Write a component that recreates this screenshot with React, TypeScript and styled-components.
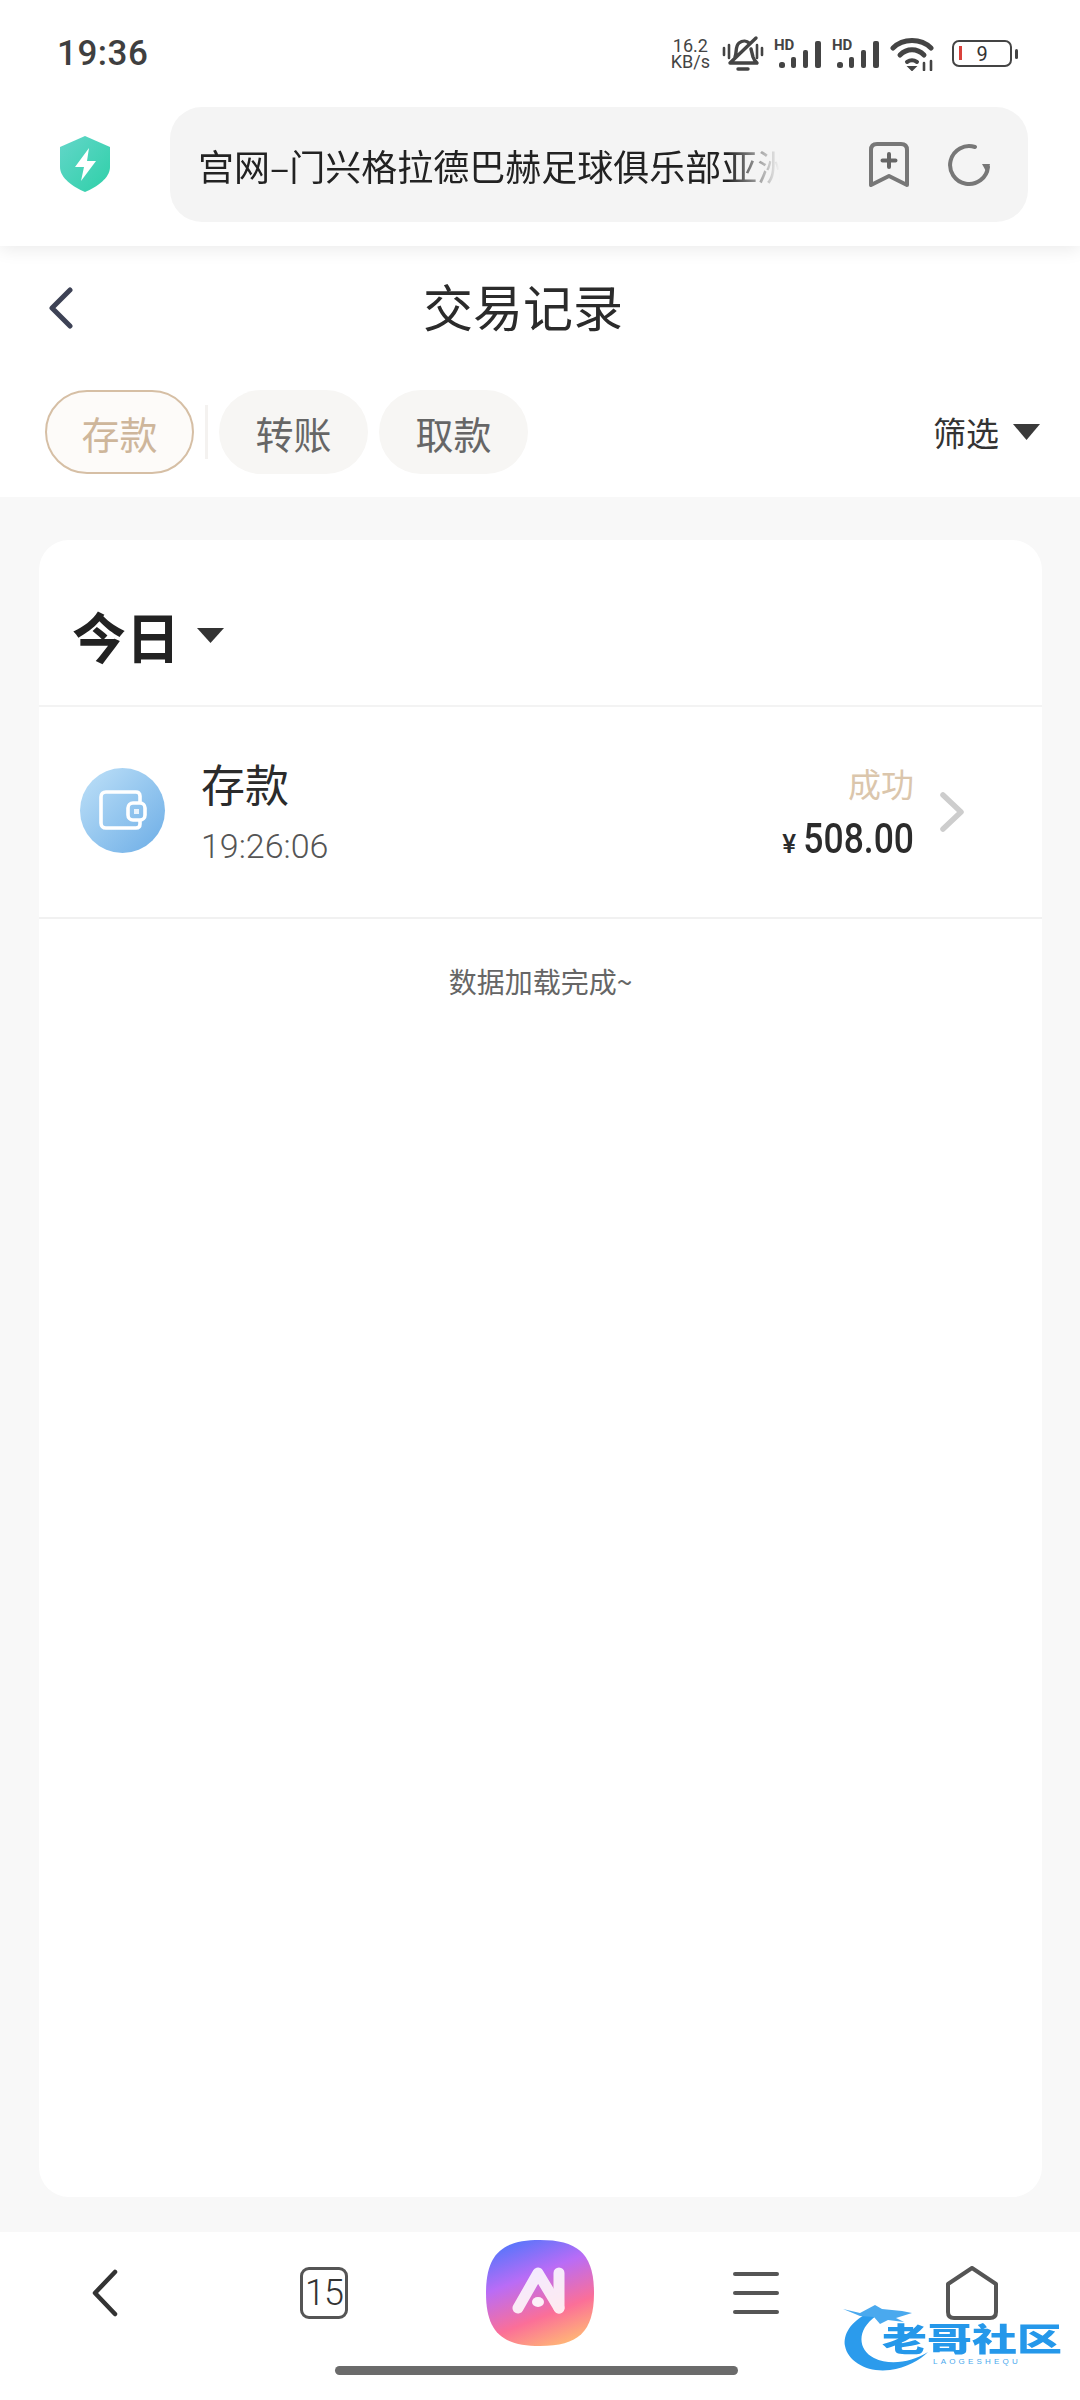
import React from 'react';
import styled, {createGlobalStyle} from 'styled-components';

const GlobalStyle = createGlobalStyle`
    html, body {
        margin: 0;
        padding: 0;
        background: #fff;
    }
    * {
        box-sizing: border-box;
    }
`

const CJK = `"Noto Sans CJK SC", "Noto Sans", sans-serif`

type TabType = {
    title: string
    active?: boolean
}

const tabs: TabType[] = [
    {title: '存款', active: true},
    {title: '转账'},
    {title: '取款'},
]

const SignalIcon = () => (
    <svg width="48" height="30" viewBox="0 0 48 30">
        <text x="0" y="11" fontFamily="Roboto, sans-serif" fontWeight="700" fontSize="15" fill="#444">HD</text>
        <g fill="#444">
            <rect x="5" y="23" width="6" height="6" rx="2.5"/>
            <rect x="17" y="18" width="5" height="11" rx="2"/>
            <rect x="29" y="11" width="5" height="18" rx="2"/>
            <rect x="41" y="2" width="6" height="27" rx="2"/>
        </g>
    </svg>
)

const BellIcon = () => (
    <svg width="42" height="38" viewBox="0 0 42 38" fill="none" stroke="#444" strokeLinecap="round" strokeLinejoin="round">
        <path d="M13 22 C15 18 13 11 17 8 C21 5 25 6 27 8 M29 14 L31 22 C32 25 33 26 35 28 H8 L34 3" strokeWidth="3.4"/>
        <path d="M16 34 H26" strokeWidth="3.4"/>
        <path d="M2 13 V20 M7 10 V23 M35 10 V23 M40 13 V20" strokeWidth="2.6"/>
    </svg>
)

const WifiIcon = () => (
    <svg width="46" height="34" viewBox="0 0 46 34" fill="none" stroke="#444" strokeWidth="5" strokeLinecap="round">
        <path d="M3 11 C13 1 31 1 41 11"/>
        <path d="M10 18 C17 11 27 11 34 18"/>
        <path d="M17 25 C20 23 24 23 27 25" strokeWidth="4"/>
        <path d="M19 30 L22 33 L25 30 Z" fill="#444" strokeWidth="2"/>
        <path d="M34 26 V33 M41 24 V33" strokeWidth="2.6"/>
    </svg>
)

const ShieldIcon = () => (
    <svg width="50" height="56" viewBox="0 0 50 56">
        <defs>
            <linearGradient id="shieldFill" x1="0" y1="0" x2="1" y2="1">
                <stop offset="0" stopColor="#63d6c9"/>
                <stop offset="1" stopColor="#2ed0a8"/>
            </linearGradient>
        </defs>
        <path d="M25 0 L50 11 V31 C50 42 37 51 25 56 C13 51 0 42 0 31 V11 Z" fill="url(#shieldFill)"/>
        <path d="M29 12 L15 31 H24 L21 45 L36 25 H27 Z" fill="#fff"/>
    </svg>
)

const BookmarkIcon = () => (
    <svg width="40" height="45" viewBox="0 0 40 45" fill="none" stroke="#777" strokeWidth="4" strokeLinejoin="round" strokeLinecap="round">
        <path d="M2 8 C2 4 4 2 8 2 H32 C36 2 38 4 38 8 V43 L20 34 L2 43 Z"/>
        <path d="M20 12 V25 M13.5 18.5 H26.5" stroke="#666"/>
    </svg>
)

const ReloadIcon = () => (
    <svg width="44" height="44" viewBox="0 0 44 44" fill="none" stroke="#777" strokeWidth="4" strokeLinecap="round">
        <path d="M28 4 A19 19 0 1 0 41 24"/>
        <path d="M35 21 H43 L40 30 Z" fill="#777" stroke="none"/>
    </svg>
)

const WalletIcon = () => (
    <svg width="48" height="40" viewBox="0 0 48 40" fill="none" stroke="#fff" strokeWidth="3.6" strokeLinejoin="round">
        <path d="M41 13 V6 C41 3 39 2 37 2 H7 C4 2 2 4 2 7 V33 C2 36 4 38 7 38 H37 C39 38 41 37 41 34 V30"/>
        <rect x="29" y="13" width="17" height="17" rx="5"/>
        <rect x="35" y="19" width="5" height="5" fill="#fff" stroke="none" opacity=".8"/>
    </svg>
)

const BrandLogo = () => (
    <svg width="108" height="106" viewBox="0 0 108 106">
        <defs>
            <linearGradient id="brandFill" x1=".3" y1="0" x2=".7" y2="1">
                <stop offset="0" stopColor="#5a75fb"/>
                <stop offset=".33" stopColor="#b96cf6"/>
                <stop offset=".7" stopColor="#fb6f98"/>
                <stop offset="1" stopColor="#ffb676"/>
            </linearGradient>
        </defs>
        <path d="M54 0 C92 0 108 14 108 53 C108 92 92 106 54 106 C16 106 0 92 0 53 C0 14 16 0 54 0 Z" fill="url(#brandFill)"/>
        <g fill="none" stroke="#fff" strokeWidth="11" strokeLinecap="round" strokeLinejoin="round" opacity=".86">
            <path d="M32 68 L52 33 L73 68"/>
            <path d="M73 33 V68"/>
        </g>
        <ellipse cx="52" cy="62" rx="6" ry="5" fill="#fff" opacity=".9"/>
    </svg>
)

const DragonMark = () => (
    <svg width="100" height="75" viewBox="0 0 100 75">
        <path d="M28 13 C10 22 3 35 5 46 C8 62 28 73 50 70 C66 68 80 60 88 52 C72 62 50 66 34 58 C18 50 16 30 36 16 Z" fill="#2b9bec"/>
        <path d="M3 9 L20 13 L35 5 L42 9 L62 11 L72 13 L56 18 L64 22 L48 20 L40 24 L34 17 L20 16 Z" fill="#4aa9ee"/>
    </svg>
)

export default function App() {
    return (
        <Screen>
            <GlobalStyle/>

            <StatusBar>
                <Clock>19:36</Clock>
                <StatusIcons>
                    <NetSpeed>
                        <span>16.2</span>
                        <span>KB/s</span>
                    </NetSpeed>
                    <BellIcon/>
                    <SignalIcon/>
                    <SignalIcon/>
                    <WifiIcon/>
                    <Battery>
                        <BatteryLevel/>
                        <BatteryDigit>9</BatteryDigit>
                    </Battery>
                    <BatteryTip/>
                </StatusIcons>
            </StatusBar>

            <BrowserBar>
                <ShieldSlot>
                    <ShieldIcon/>
                </ShieldSlot>
                <UrlPill>
                    <UrlText>宫网–门兴格拉德巴赫足球俱乐部亚洲</UrlText>
                    <UrlActions>
                        <BookmarkIcon/>
                        <ReloadIcon/>
                    </UrlActions>
                </UrlPill>
            </BrowserBar>

            <TopSection>
                <TitleRow>
                    <svg width="24" height="42" viewBox="0 0 24 42" fill="none" stroke="#3d4255" strokeWidth="5" strokeLinecap="round" strokeLinejoin="round">
                        <path d="M21 3 L3 21 L21 39"/>
                    </svg>
                    <Title>交易记录</Title>
                </TitleRow>
                <TabsRow>
                    <Tabs>
                        {tabs.map((t, i) => (
                            <React.Fragment key={t.title}>
                                <Tab $active={t.active}>{t.title}</Tab>
                                {i === 0 && <TabDivider/>}
                            </React.Fragment>
                        ))}
                    </Tabs>
                    <Filter>
                        筛选
                        <DownArrow $size={27} $height={16} $color="#3a3a3a"/>
                    </Filter>
                </TabsRow>
            </TopSection>

            <Body>
                <Card>
                    <DayHeader>
                        今日
                        <DownArrow $size={27} $height={15} $color="#333"/>
                    </DayHeader>
                    <Record>
                        <RecordIcon>
                            <WalletIcon/>
                        </RecordIcon>
                        <RecordInfo>
                            <RecordName>存款</RecordName>
                            <RecordTime>19:26:06</RecordTime>
                        </RecordInfo>
                        <RecordSum>
                            <RecordStatus>成功</RecordStatus>
                            <Amount>
                                <Currency>¥</Currency>
                                <AmountValue>508.00</AmountValue>
                            </Amount>
                        </RecordSum>
                        <svg width="25" height="40" viewBox="0 0 25 40" fill="none" stroke="#cdcdcd" strokeWidth="5.5" strokeLinecap="round" strokeLinejoin="round">
                            <path d="M3 3 L21 20 L3 37"/>
                        </svg>
                    </Record>
                    <LoadedNote>数据加载完成~</LoadedNote>
                </Card>
            </Body>

            <BottomNav>
                <NavIcons>
                    <NavItem>
                        <NavBack width="26" height="48" viewBox="0 0 26 48" fill="none" stroke="#333" strokeWidth="4.5" strokeLinecap="round" strokeLinejoin="round">
                            <path d="M23 3 L3 24 L23 45"/>
                        </NavBack>
                    </NavItem>
                    <NavItem>
                        <TabCount>15</TabCount>
                    </NavItem>
                    <NavItem>
                        <BrandLogo/>
                    </NavItem>
                    <NavItem>
                        <MenuLines>
                            <MenuLine/>
                            <MenuLine/>
                            <MenuLine/>
                        </MenuLines>
                    </NavItem>
                    <NavItem>
                        <svg width="52" height="54" viewBox="0 0 52 54" fill="none" stroke="#555" strokeWidth="4" strokeLinejoin="round">
                            <path d="M26 2 L50 18 V46 C50 50 48 52 44 52 H8 C4 52 2 50 2 46 V18 Z"/>
                        </svg>
                    </NavItem>
                </NavIcons>
                <HomeIndicator/>
            </BottomNav>

            <Watermark>
                <DragonMark/>
                <WatermarkName>老哥社区</WatermarkName>
                <WatermarkSub>LAOGESHEQU</WatermarkSub>
            </Watermark>
        </Screen>
    );
}

const Screen = styled.div`
    position: relative;
    display: flex;
    flex-direction: column;
    width: 1080px;
    height: 2400px;
    overflow: hidden;
    background: #fff;
    font-family: ${CJK};
`

const StatusBar = styled.div`
    display: flex;
    justify-content: space-between;
    align-items: center;
    height: 107px;
    padding: 0 62px 0 57px;
`

const Clock = styled.span`
    font-family: Roboto, sans-serif;
    font-size: 35px;
    font-weight: 500;
    letter-spacing: .5px;
    color: #3f3f3f;
`

const StatusIcons = styled.div`
    display: flex;
    align-items: center;
    gap: 10px;
`

const NetSpeed = styled.div`
    display: flex;
    flex-direction: column;
    align-items: center;
    margin-right: 2px;
    font-family: Roboto, sans-serif;
    font-size: 18px;
    line-height: 16px;
    color: #444;
`

const Battery = styled.div`
    position: relative;
    display: flex;
    align-items: center;
    justify-content: center;
    width: 60px;
    height: 27px;
    margin-left: 6px;
    border: 2.5px solid #444;
    border-radius: 7px;
`

const BatteryLevel = styled.i`
    position: absolute;
    left: 5px;
    top: 4px;
    width: 3px;
    height: 14px;
    background: #d9413b;
`

const BatteryDigit = styled.span`
    font-family: Roboto, sans-serif;
    font-size: 20px;
    color: #333;
`

const BatteryTip = styled.i`
    width: 3px;
    height: 10px;
    margin-left: -7px;
    border-radius: 2px;
    background: #444;
`

const BrowserBar = styled.div`
    position: relative;
    z-index: 1;
    display: flex;
    align-items: flex-start;
    height: 139px;
    padding-right: 52px;
    background: #fff;
    box-shadow: 0 4px 16px rgba(0, 0, 0, .08);
    clip-path: inset(0 0 -30px 0);
`

const ShieldSlot = styled.div`
    display: flex;
    justify-content: center;
    width: 170px;
    padding-top: 29px;
`

const UrlPill = styled.div`
    display: flex;
    align-items: center;
    flex: 1;
    height: 115px;
    padding-left: 28px;
    border-radius: 32px;
    background: #f4f4f4;
`

const UrlText = styled.div`
    width: 582px;
    margin-right: 89px;
    overflow: hidden;
    white-space: nowrap;
    font-size: 36px;
    color: #222;
    mask-image: linear-gradient(to right, #000 91%, transparent 100%);
`

const UrlActions = styled.div`
    display: flex;
    align-items: center;
    gap: 38px;
`

const TopSection = styled.div`
    background: #fff;
`

const TitleRow = styled.div`
    display: flex;
    align-items: center;
    height: 124px;
    padding-left: 49px;
`

const Title = styled.h1`
    margin: 0 0 6px 350px;
    font-size: 50px;
    font-weight: 400;
    color: #2b2b2b;
`

const TabsRow = styled.div`
    display: flex;
    justify-content: space-between;
    align-items: center;
    padding: 20px 40px 23px 45px;
`

const Tabs = styled.div`
    display: flex;
    align-items: center;
`

const Tab = styled.div<{ $active?: boolean }>`
    display: flex;
    align-items: center;
    justify-content: center;
    width: 149px;
    height: 84px;
    margin-right: 11px;
    border: ${props => props.$active ? '2.5px solid #d6bfa5' : 'none'};
    border-radius: 42px;
    font-size: 38px;
    color: ${props => props.$active ? '#ceb69b' : '#666'};
    background: ${props => props.$active ? '#fdfbf9' : '#f7f6f4'};
`

const TabDivider = styled.i`
    width: 3px;
    height: 54px;
    margin-right: 11px;
    background: #f4f2f0;
`

const Filter = styled.div`
    display: flex;
    align-items: center;
    gap: 14px;
    font-size: 33px;
    color: #333;
`

const DownArrow = styled.i<{ $size: number, $height: number, $color: string }>`
    width: ${props => props.$size}px;
    height: ${props => props.$height}px;
    background: ${props => props.$color};
    clip-path: polygon(0 0, 100% 0, 50% 100%);
`

const Body = styled.div`
    flex: 1;
    display: flex;
    padding: 43px 38px 35px 39px;
    background: #f8f8f8;
`

const Card = styled.div`
    flex: 1;
    border-radius: 30px;
    background: #fff;
`

const DayHeader = styled.div`
    display: flex;
    align-items: center;
    gap: 17px;
    height: 167px;
    padding: 26px 0 0 33px;
    border-bottom: 2px solid #f3f3f3;
    font-size: 54px;
    font-weight: 700;
    color: #222;
`

const Record = styled.div`
    display: flex;
    align-items: center;
    height: 212px;
    padding: 0 77px 0 41px;
    border-bottom: 2px solid #f1f1f1;
`

const RecordIcon = styled.div`
    display: flex;
    align-items: center;
    justify-content: center;
    width: 85px;
    height: 85px;
    margin-top: -4px;
    border-radius: 50%;
    background: linear-gradient(135deg, #bfe1f8, #6cadE6);
`

const RecordInfo = styled.div`
    flex: 1;
    display: flex;
    flex-direction: column;
    gap: 18px;
    margin-left: 36px;
`

const RecordName = styled.div`
    font-size: 44px;
    line-height: 50px;
    color: #2b2b2b;
`

const RecordTime = styled.div`
    font-family: Roboto, sans-serif;
    font-size: 34px;
    font-weight: 300;
    line-height: 40px;
    color: #555;
`

const RecordSum = styled.div`
    display: flex;
    flex-direction: column;
    align-items: flex-end;
    gap: 14px;
    margin-right: 26px;
`

const RecordStatus = styled.div`
    font-size: 33px;
    line-height: 40px;
    color: #dbc6ac;
`

const Amount = styled.div`
    display: flex;
    align-items: baseline;
    color: #2b2b2b;
`

const Currency = styled.span`
    font-family: Roboto, sans-serif;
    font-size: 26px;
    font-weight: 500;
`

const AmountValue = styled.span`
    display: inline-block;
    margin-left: -13px;
    font-family: Roboto, sans-serif;
    font-size: 42px;
    font-weight: 500;
    line-height: 44px;
    transform: scaleX(.845);
    transform-origin: right center;
`

const LoadedNote = styled.div`
    margin-top: 40px;
    text-align: center;
    font-size: 28px;
    line-height: 44px;
    color: #666;
`

const BottomNav = styled.div`
    height: 168px;
    padding-top: 8px;
    background: #fff;
`

const NavIcons = styled.div`
    display: grid;
    grid-template-columns: repeat(5, 216px);
    height: 106px;
`

const NavItem = styled.div`
    display: flex;
    align-items: center;
    justify-content: center;
`

const NavBack = styled.svg`
    margin-right: 6px;
`

const TabCount = styled.div`
    display: flex;
    align-items: center;
    justify-content: center;
    width: 48px;
    height: 52px;
    border: 3.5px solid #555;
    border-radius: 9px;
    font-family: Roboto, sans-serif;
    font-size: 36px;
    font-weight: 300;
    letter-spacing: -1px;
    color: #333;
`

const MenuLines = styled.div`
    display: flex;
    flex-direction: column;
    gap: 15px;
`

const MenuLine = styled.i`
    display: block;
    width: 46px;
    height: 4px;
    border-radius: 2px;
    background: #555;
`

const HomeIndicator = styled.div`
    width: 403px;
    height: 9px;
    margin: 20px 0 0 335px;
    border-radius: 5px;
    background: #6b6b6b;
`

const Watermark = styled.div`
    position: absolute;
    left: 840px;
    top: 2300px;
    width: 228px;
    height: 80px;
`

const WatermarkName = styled.div`
    position: absolute;
    left: 42px;
    top: 12px;
    width: 184px;
    font-size: 45px;
    font-weight: 900;
    line-height: 50px;
    white-space: nowrap;
    color: #2598ea;
    transform: scaleY(.72);
`

const WatermarkSub = styled.div`
    position: absolute;
    left: 93px;
    top: 57px;
    font-family: "Liberation Sans", sans-serif;
    font-size: 8px;
    letter-spacing: 3.2px;
    white-space: nowrap;
    color: #4aa9ee;
`
